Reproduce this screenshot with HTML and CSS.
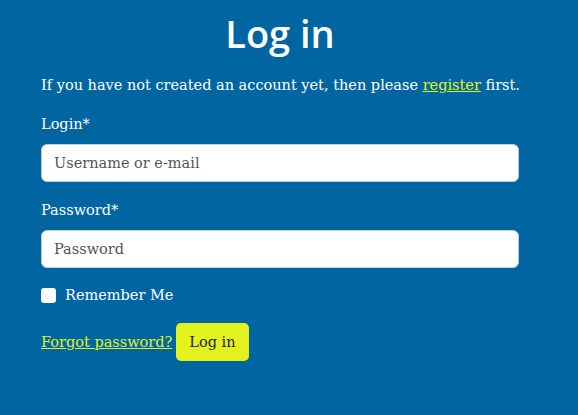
FILE: index.html
```html
<!DOCTYPE html>
<html>
<head>
<meta charset="utf-8">
<link rel="stylesheet" href="styles.css">
</head>
<body>
<main class="page">
  <h1 class="title">Log in</h1>
  <p class="intro">If you have not created an account yet, then please <a href="#" class="link">register</a> first.</p>
  <form class="form">
    <label class="label" for="login">Login*</label>
    <input class="field" id="login" type="text" placeholder="Username or e-mail">
    <label class="label" for="pw">Password*</label>
    <input class="field" id="pw" type="password" placeholder="Password">
    <label class="remember"><span class="box"></span>Remember Me</label>
    <div class="actions">
      <a href="#" class="link">Forgot password?</a>
      <button type="button" class="btn">Log in</button>
    </div>
  </form>
</main>
</body>
</html>
```
FILE: styles.css
```css
html, body { margin: 0; padding: 0; }
body {
  background: #0065a1;
  color: #fff;
  font-family: "DejaVu Serif", "Liberation Serif", serif;
  font-size: 14.5px;
  width: 578px;
  height: 415px;
  overflow: hidden;
}
.page {
  width: 478px;
  margin: 0 auto 0 41px;
  padding-top: 10px;
}
.title {
  font-family: "Open Sans", "Noto Sans", sans-serif;
  font-weight: 600;
  font-size: 38px;
  line-height: 46px;
  text-align: center;
  margin: 0 0 17px 0;
}
.intro { margin: 0 0 16px 0; line-height: 24px; white-space: nowrap; }
.link { color: #e3f21c; text-decoration: underline; }
.form { display: flex; flex-direction: column; }
.label { line-height: 22px; margin-bottom: 9px; }
.field {
  box-sizing: border-box;
  height: 38px;
  width: 478px;
  border: 1px solid #c8ccd2;
  border-radius: 6px;
  padding: 0 12px;
  font-family: inherit;
  font-size: 14.5px;
  color: #444;
  margin-bottom: 17px;
  background: #fff;
}
.field::placeholder { color: #555; }
.remember { display: flex; align-items: center; gap: 9px; line-height: 22px; margin-top: -1px; }
.box { width: 15px; height: 15px; background: #fff; border-radius: 3px; display: inline-block; }
.actions { display: flex; align-items: center; gap: 4px; margin-top: 17px; }
.btn {
  background: #e3f21c;
  color: #222;
  border: 0;
  border-radius: 5px;
  height: 38px;
  padding: 0 13px;
  font-family: inherit;
  font-size: 14.5px;
}
```
